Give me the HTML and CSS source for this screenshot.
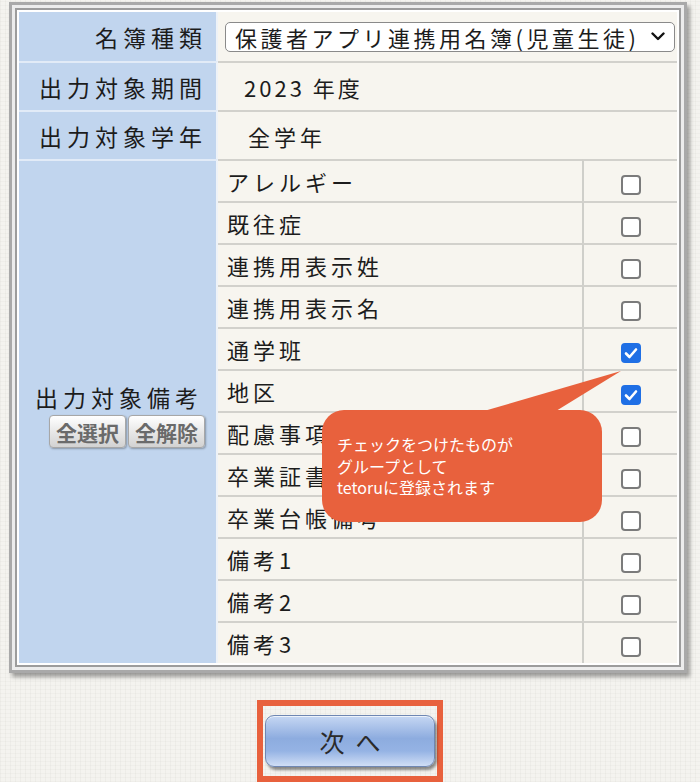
FILE: index.html
```html
<!DOCTYPE html>
<html lang="ja">
<head>
  <meta charset="UTF-8" />
  <title>名簿出力</title>
  <link rel="stylesheet" href="styles.css">
</head>
<body>
  <div class="page">
    <div class="frame">
      <div class="frame-inner">
        <table class="form">
          <colgroup>
            <col class="c-label">
            <col class="c-item">
            <col class="c-check">
          </colgroup>
          <tr class="head">
            <th>名簿種類</th>
            <td colspan="2" class="sel-cell">
              <div class="select">
                <span>保護者アプリ連携用名簿(児童生徒)</span>
                <svg width="14" height="9" viewBox="0 0 14 9"><path d="M1.5 1.5 L7 7 L12.5 1.5" fill="none" stroke="#111" stroke-width="2.4" stroke-linecap="round" stroke-linejoin="round"/></svg>
              </div>
            </td>
          </tr>
          <tr class="head">
            <th>出力対象期間</th>
            <td colspan="2" class="val">2023 年度</td>
          </tr>
          <tr class="head">
            <th>出力対象学年</th>
            <td colspan="2" class="val val-grade">全学年</td>
          </tr>
          <tr class="item">
            <th rowspan="12" class="remarks">
              <div class="remarks-box">
                <div>出力対象備考</div>
                <div class="btns">
                  <button class="mini">全選択</button><button class="mini">全解除</button>
                </div>
              </div>
            </th>
            <td>アレルギー</td>
            <td class="chk"><span class="cb"></span></td>
          </tr>
          <tr class="item"><td>既往症</td><td class="chk"><span class="cb"></span></td></tr>
          <tr class="item"><td>連携用表示姓</td><td class="chk"><span class="cb"></span></td></tr>
          <tr class="item"><td>連携用表示名</td><td class="chk"><span class="cb"></span></td></tr>
          <tr class="item"><td>通学班</td><td class="chk"><span class="cb on"><svg width="14" height="12" viewBox="0 0 14 12"><path d="M2 6.5 L5.5 10 L12 2.5" fill="none" stroke="#fff" stroke-width="2.6" stroke-linecap="round" stroke-linejoin="round"/></svg></span></td></tr>
          <tr class="item"><td>地区</td><td class="chk"><span class="cb on"><svg width="14" height="12" viewBox="0 0 14 12"><path d="M2 6.5 L5.5 10 L12 2.5" fill="none" stroke="#fff" stroke-width="2.6" stroke-linecap="round" stroke-linejoin="round"/></svg></span></td></tr>
          <tr class="item"><td>配慮事項</td><td class="chk"><span class="cb"></span></td></tr>
          <tr class="item"><td>卒業証書</td><td class="chk"><span class="cb"></span></td></tr>
          <tr class="item"><td>卒業台帳備考</td><td class="chk"><span class="cb"></span></td></tr>
          <tr class="item"><td>備考1</td><td class="chk"><span class="cb"></span></td></tr>
          <tr class="item"><td>備考2</td><td class="chk"><span class="cb"></span></td></tr>
          <tr class="item"><td>備考3</td><td class="chk"><span class="cb"></span></td></tr>
        </table>
      </div>
    </div>

    <!-- callout over the table -->
    <svg class="pointer" width="140" height="42" viewBox="0 0 140 42"><polygon points="0,41 72,41 137,1" fill="#e8613d"/></svg>
    <div class="callout">チェックをつけたものが<br>グループとして<br>tetoruに登録されます</div>

    <div class="next-wrap">
      <div class="next-mark">
        <button class="next">次&nbsp;&nbsp;へ</button>
      </div>
    </div>
  </div>
</body>
</html>
```

FILE: styles.css
```css
:root {
  --blue: #c1d5ee;
  --beige: #f7f5ef;
  --line: #d2d1cc;
  --orange: #e8613d;
  --text: #1c1c1c;
}

* {
  box-sizing: border-box;
}

body {
  margin: 0;
  font-family: "Noto Sans CJK JP", "Noto Sans", sans-serif;
  color: var(--text);
  background-color: #f4f3ef;
  background-image:
    repeating-linear-gradient(90deg, rgba(180, 180, 170, 0.10) 0 1px, transparent 1px 5px),
    repeating-linear-gradient(0deg, rgba(180, 180, 170, 0.08) 0 1px, transparent 1px 4px);
}

.page {
  position: relative;
  width: 700px;
  height: 782px;
  overflow: hidden;
}

.frame {
  margin: 2px 0 0 9px;
  width: 678px;
  border: 3px solid #a9a9a9;
  padding: 3px;
  background: #ececec;
  box-shadow: 3px 4px 4px rgba(0, 0, 0, 0.35);
}

.frame-inner {
  border: 2px solid #9c9c9c;
  padding: 2px;
  background: #fff;
}

.form {
  width: 658px;
  table-layout: fixed;
  border-collapse: separate;
  border-spacing: 0;
  font-size: 22px;
  letter-spacing: 4px;
}

.c-label { width: 199px; }
.c-item { width: 364px; }
.c-check { width: 95px; }

.form th {
  background: var(--blue);
  font-size: 23px;
  font-weight: normal;
  text-align: right;
  padding: 0 9px 0 0;
  letter-spacing: 5px;
  border-top: 2px solid #e2ebf7;
  border-right: 2px solid #eef2f7;
}

.form td {
  background: var(--beige);
  border-top: 2px solid var(--line);
  padding: 0 0 0 9px;
  white-space: nowrap;
}

.form tr:first-child th,
.form tr:first-child td {
  border-top: none;
}

.head { height: 49px; }
.head:nth-child(4) { height: 50px; }
.item { height: 42px; }

.sel-cell {
  padding: 0 2px 0 7px !important;
}

.select {
  display: flex;
  align-items: center;
  justify-content: space-between;
  height: 30px;
  background: #fff;
  border: 1px solid #8a8a8a;
  border-radius: 5px;
  padding: 0 9px 0 9px;
  letter-spacing: 3.5px;
}

.val {
  padding-left: 26px !important;
  letter-spacing: 3px;
}

.val-grade {
  padding-left: 30px !important;
  letter-spacing: 4px;
}

.form td.chk {
  border-left: 2px solid #cfcfca;
  text-align: center;
  padding: 0;
}

.cb {
  display: inline-flex;
  align-items: center;
  justify-content: center;
  width: 20px;
  height: 20px;
  border: 2px solid #7b7b7b;
  border-radius: 4px;
  background: #fff;
  vertical-align: middle;
}

.cb.on {
  background: #1f6fe5;
  border-color: #1f6fe5;
}

.form th.remarks {
  vertical-align: middle;
  padding-right: 13px;
}

.remarks-box {
  display: flex;
  flex-direction: column;
  align-items: flex-end;
  padding-top: 4px;
}

.btns {
  display: flex;
  gap: 2px;
  margin-top: 1px;
  margin-right: -2px;
}

.mini {
  font-family: inherit;
  font-size: 21px;
  font-weight: bold;
  letter-spacing: 0;
  color: #6a6a6a;
  height: 33px;
  width: 77px;
  padding: 0;
  border: 1px solid #a7a7a7;
  border-radius: 4px;
  background: linear-gradient(#ffffff, #e6e6e6 55%, #d2d2d2);
  box-shadow: 1px 1px 2px rgba(0, 0, 0, 0.3);
}

.pointer {
  position: absolute;
  left: 484px;
  top: 370px;
}

.callout {
  position: absolute;
  left: 322px;
  top: 410px;
  width: 280px;
  height: 112px;
  padding: 24px 0 0 15px;
  background: var(--orange);
  border-radius: 22px;
  color: #fff;
  font-size: 16px;
  line-height: 21.5px;
}

.next-wrap {
  display: flex;
  justify-content: center;
  margin-top: 27px;
}

.next-mark {
  width: 186px;
  height: 82px;
  border: 6px solid var(--orange);
  padding: 9px 2px 0 2px;
}

.next {
  width: 170px;
  height: 52px;
  font-family: inherit;
  font-size: 25px;
  color: #2a2a2a;
  border: 1px solid #6f87b3;
  border-radius: 9px;
  background: linear-gradient(#c6d7f3, #8dacdf 45%, #95b3e4 70%, #d0def5);
  box-shadow: 2px 3px 3px rgba(0, 0, 0, 0.45), inset 0 1px 0 rgba(255, 255, 255, 0.7);
}
```
